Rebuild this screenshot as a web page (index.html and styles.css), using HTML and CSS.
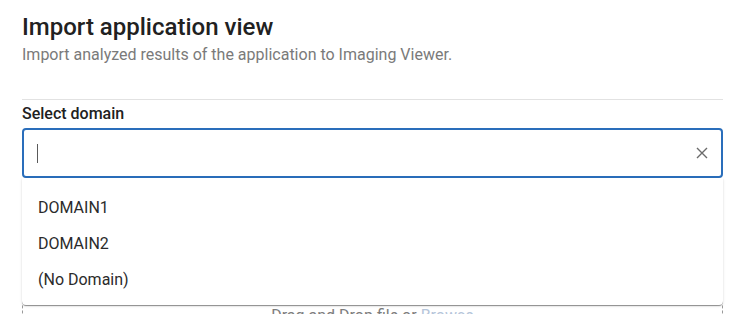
FILE: index.html
```html
<!DOCTYPE html>
<html>
<head>
<meta charset="utf-8">
<link rel="stylesheet" href="styles.css">
</head>
<body>
<div class="page">
  <header class="head">
    <h1 class="title">Import application view</h1>
    <p class="subtitle">Import analyzed results of the application to Imaging Viewer.</p>
  </header>
  <div class="divider"></div>
  <div class="field">
    <label class="label">Select domain</label>
    <div class="combo">
      <div class="input"><span class="caret"></span></div>
      <button class="clear" aria-label="clear">
        <svg width="12" height="12" viewBox="0 0 12 12"><path d="M1 1 L11 11 M11 1 L1 11" stroke="#6b6b6b" stroke-width="1.4" fill="none"/></svg>
      </button>
      <ul class="menu">
        <li class="item">DOMAIN1</li>
        <li class="item">DOMAIN2</li>
        <li class="item">(No Domain)</li>
      </ul>
    </div>
  </div>
  <div class="drop">
    <span class="drop-text">Drag and Drop file or <span class="browse">Browse</span></span>
  </div>
</div>
</body>
</html>
```
FILE: styles.css
```css
* { box-sizing: border-box; }
html, body { margin: 0; padding: 0; background: #fff; }
body { font-family: Roboto, "Liberation Sans", sans-serif; color: #212121; overflow: hidden; }
.page { padding: 13px 7px 0 22px; width: 730px; }
.title { margin: 0; font-size: 24px; font-weight: 500; line-height: 28px; color: #212121; }
.subtitle { margin: 4px 0 0; font-size: 16px; line-height: 20px; color: #7a7a7a; }
.divider { height: 1px; background: #e2e2e2; margin-top: 34px; }
.field { margin-top: 4px; }
.label { display: block; font-size: 16px; font-weight: 500; line-height: 20px; color: #212121; }
.combo { position: relative; margin-top: 4px; }
.input { height: 50px; border: 2px solid #2a6ebb; border-radius: 4px; display: flex; align-items: center; padding-left: 13px; }
.caret { width: 1px; height: 19px; background: #5a5a5a; }
.clear { position: absolute; right: 15px; top: 19px; border: 0; background: none; padding: 0; width: 12px; height: 12px; display: flex; }
.menu { position: absolute; left: 0; right: 0; top: 50px; margin: 0; padding: 12px 0 7px; list-style: none; background: #fff; border-radius: 0 0 4px 4px; box-shadow: 0 2px 1px -1px rgba(0,0,0,0.3), 0 1px 1px 0 rgba(0,0,0,0.14), 0 1px 3px 0 rgba(0,0,0,0.12); z-index: 2; }
.item { height: 36px; line-height: 36px; padding-left: 16px; font-size: 16px; color: #2b2b2b; }
.drop { margin-top: 16px; height: 160px; border: 1px dashed #9a9a9a; display: flex; justify-content: center; padding-top: 111px; }
.drop-text { font-size: 16px; color: #7d7d7d; line-height: 20px; }
.browse { color: #b5c5da; }
```
